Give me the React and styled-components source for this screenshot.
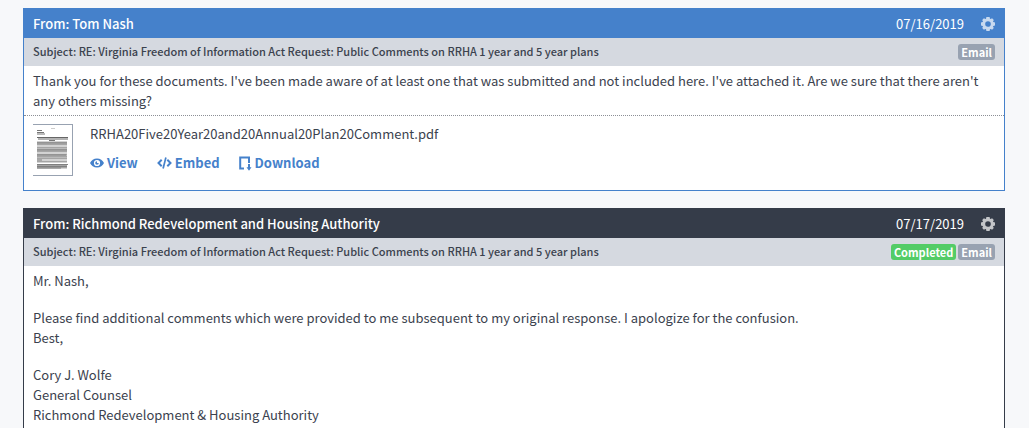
import React from "react";
import styled, { createGlobalStyle } from "styled-components";

const GlobalStyle = createGlobalStyle`
  * { box-sizing: border-box; }
  body {
    margin: 0;
    background: #f7f8fa;
    color: #3b424e;
    font-family: "Source Sans Pro", "Noto Sans CJK SC", "Noto Sans", sans-serif;
    font-size: 13px;
    line-height: 20px;
  }
`;

const Page = styled.main`
  display: flex;
  flex-direction: column;
  gap: 17px;
  padding: 8px 24px 24px 23px;
`;

const Card = styled.article`
  background: #fff;
  border: 1px solid ${(p) => p.$accent};
`;

const CardHeader = styled.header`
  display: flex;
  align-items: center;
  gap: 17px;
  height: 29px;
  padding: 0 9px;
  background: ${(p) => p.$accent};
  color: #fff;
`;

const Sender = styled.h2`
  flex: 1;
  margin: 0;
  font-size: 13px;
  font-weight: 500;
`;

const Sent = styled.time`
  font-size: 13px;
`;

const GearButton = styled.button`
  display: flex;
  padding: 0;
  border: 0;
  background: none;
  color: inherit;
  opacity: 0.7;
  cursor: pointer;
`;

const SubjectBar = styled.div`
  display: flex;
  align-items: center;
  gap: 2px;
  height: 28px;
  padding: 0 9px;
  background: #d5d9e0;
`;

const Subject = styled.h3`
  flex: 1;
  margin: 0;
  padding-bottom: 2px;
  font-size: 11px;
  font-weight: 500;
`;

const Tag = styled.span`
  height: 16px;
  padding: 0 3px;
  border-radius: 3px;
  background: ${(p) => p.$color};
  color: #fff;
  font-size: 11px;
  font-weight: 700;
  line-height: 16px;
`;

const Message = styled.div`
  padding: 5px 9px 4px;

  p {
    margin: 0 0 17px;
  }

  p:last-child {
    margin-bottom: 0;
  }
`;

const Attachment = styled.section`
  display: flex;
  gap: 17px;
  padding: 8px 9px 14px;
  border-top: 1px dotted #8c8f96;
`;

const Thumb = styled.svg`
  flex: none;
  width: 40px;
  height: 52px;
  border: 1px solid #98a2b1;
  border-left: 0;
`;

const FileInfo = styled.div`
  display: flex;
  flex-direction: column;
  gap: 9px;
`;

const Actions = styled.nav`
  display: flex;
  gap: 19px;
`;

const Action = styled.a`
  display: flex;
  align-items: center;
  gap: 3px;
  color: #4581cb;
  font-weight: 700;
  text-decoration: none;
`;

const Gear = () => (
  <svg width="14" height="14" viewBox="0 0 14 14" fill="currentColor" aria-hidden="true">
    <path
      fillRule="evenodd"
      d="M5.400 0h3.200l.4 1.700.6.300 1.500-.8 1.700 1.700-.8 1.500.3.700 1.700.4v3l-1.700.4-.3.700.8 1.500-1.700 1.700-1.500-.8-.6.300L8.600 14H5.400l-.4-1.700-.6-.3-1.500.8-1.700-1.700.8-1.500-.3-.700L0 8.500v-3l1.700-.4.3-.700-.8-1.500 1.700-1.700 1.500.8.6-.3zM7 4.200a2.800 2.800 0 1 0 0 5.600 2.800 2.800 0 0 0 0-5.600z"
    />
  </svg>
);

const Eye = () => (
  <svg width="14" height="10" viewBox="0 0 14 10" aria-hidden="true">
    <path
      fill="currentColor"
      fillRule="evenodd"
      d="M7 .5C3.800.5 1.200 2.400 0 5c1.200 2.600 3.800 4.500 7 4.500S12.800 7.600 14 5C12.800 2.400 10.200.5 7 .5zM7 1.900a3.100 3.100 0 1 1 0 6.200 3.100 3.100 0 0 1 0-6.200z"
    />
    <path fill="currentColor" d="M7 3.200A1.800 1.800 0 1 0 8.800 5H7z" />
  </svg>
);

const Code = () => (
  <svg width="15" height="12" viewBox="0 0 15 12" fill="none" stroke="currentColor" strokeWidth="2" aria-hidden="true">
    <path d="M4.700 2.700 1.500 6l3.200 3.300M10.300 2.700 13.500 6l-3.200 3.300" />
    <path d="M8.900.5 6.100 11.500" strokeWidth="1.700" />
  </svg>
);

const Save = () => (
  <svg width="13" height="15" viewBox="0 0 13 15" aria-hidden="true">
    <path d="M5 12.500H1.200V1.500h8.800V7" fill="none" stroke="currentColor" strokeWidth="2" />
    <path d="M9 8h2v3.200h1.500L10 14.700 7.500 11.200H9z" fill="currentColor" />
  </svg>
);

const DENSE_LINES = [17, 19, 22, 24, 26, 29, 31, 33, 36, 40, 42];

const DocumentThumb = () => (
  <Thumb viewBox="0 0 39 50" role="img" aria-label="Document preview">
    <g stroke="#777" strokeWidth="1">
      <path d="M18 3.500h4" stroke="#ccc" />
      <path d="M4 5.500h5M4 7.500h7M4 9h8" stroke="#777" />
      <path d="M4 12.500h31M5 14h30" stroke="#666" />
      <path d="M16 15.500h6" stroke="#777" />
      {DENSE_LINES.map((y) => (
        <path key={y} d={`M4 ${y + 0.5}h30`} stroke="#a5a5a5" strokeWidth="2" />
      ))}
      <path d="M4 18h30M4 25h30M4 30h29M4 35h5M4 39.500h31M4 41.500h30M4 43h24" stroke="#808080" />
    </g>
  </Thumb>
);

const SUBJECT =
  "Subject: RE: Virginia Freedom of Information Act Request: Public Comments on RRHA 1 year and 5 year plans";

const MessageCard = ({ accent, from, date, isoDate, tags, children }) => (
  <Card $accent={accent}>
    <CardHeader $accent={accent}>
      <Sender>From: {from}</Sender>
      <Sent dateTime={isoDate}>{date}</Sent>
      <GearButton type="button" aria-label="Message options">
        <Gear />
      </GearButton>
    </CardHeader>
    <SubjectBar>
      <Subject>{SUBJECT}</Subject>
      {tags.map((tag) => (
        <Tag key={tag.label} $color={tag.color}>
          {tag.label}
        </Tag>
      ))}
    </SubjectBar>
    {children}
  </Card>
);

const EMAIL = { label: "Email", color: "#98a2b1" };
const COMPLETED = { label: "Completed", color: "#53cc66" };

export default function App() {
  return (
    <>
      <GlobalStyle />
      <Page>
        <MessageCard accent="#4581cb" from="Tom Nash" date="07/16/2019" isoDate="2019-07-16" tags={[EMAIL]}>
          <Message>
            <p>
              Thank you for these documents. I've been made aware of at least one that was submitted and not
              included here. I've attached it. Are we sure that there aren't any others missing?
            </p>
          </Message>
          <Attachment>
            <DocumentThumb />
            <FileInfo>
              <span>RRHA20Five20Year20and20Annual20Plan20Comment.pdf</span>
              <Actions>
                <Action href="#view">
                  <Eye />
                  View
                </Action>
                <Action href="#embed">
                  <Code />
                  Embed
                </Action>
                <Action href="#download">
                  <Save />
                  Download
                </Action>
              </Actions>
            </FileInfo>
          </Attachment>
        </MessageCard>

        <MessageCard
          accent="#353c49"
          from="Richmond Redevelopment and Housing Authority"
          date="07/17/2019"
          isoDate="2019-07-17"
          tags={[COMPLETED, EMAIL]}
        >
          <Message>
            <p>Mr. Nash,</p>
            <p>
              Please find additional comments which were provided to me subsequent to my original response. I
              apologize for the confusion.
              <br />
              Best,
            </p>
            <p>
              Cory J. Wolfe
              <br />
              General Counsel
              <br />
              Richmond Redevelopment &amp; Housing Authority
            </p>
          </Message>
        </MessageCard>
      </Page>
    </>
  );
}
